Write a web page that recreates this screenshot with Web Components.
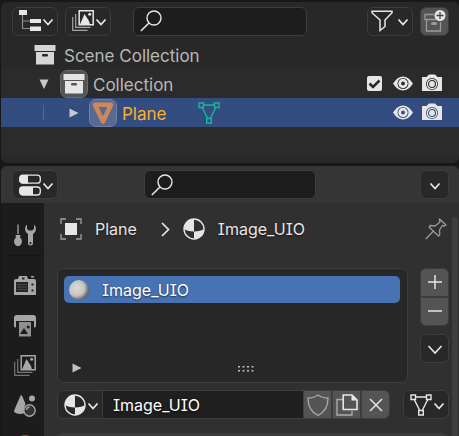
<!DOCTYPE html>
<html lang="en">
<head>
<meta charset="utf-8">
<title>Outliner and Properties</title>
<style>
html, body { height: 100%; }
body {
  margin: 0; background: #181818; color: #e6e6e6; overflow: hidden;
  font: 16px/22px Inter, "Noto Sans", sans-serif;
  font-feature-settings: "cv08" 1;
}
</style>
</head>
<body>
<editor-window></editor-window>
<script>
const ICONS = {
  tree: '<path d="M3.5 5v13.5H11M3.5 11H11" fill="none" stroke="#8c8c8c" stroke-width="1.2"/><path d="M0 0h8v5H0zM11 9h11v4H11zM11 16.5h11v4.500H11z" fill="currentColor"/>',
  images: '<path d="M.7 7v13.300H15.500M3.700 4v13.300H18.500" fill="none" stroke="currentColor" stroke-width="1.2" opacity=".65"/><path d="M7.200.8h14v14h-14z" fill="none" stroke="currentColor" stroke-width="1.5"/><path d="M8 14.500 12.500 4 17 11v0l1 3.500z" fill="currentColor"/><circle cx="17.700" cy="4.300" r="1.500" fill="currentColor"/>',
  search: '<circle cx="14" cy="8" r="7" fill="none" stroke="currentColor" stroke-width="1.400"/><path d="M9 13 .8 21" stroke="currentColor" stroke-width="1.600"/>',
  filter: '<path d="M1 1.200h20v1.500l-7 7.300v6.500L9 20.500V10L1 2.700z" fill="none" stroke="currentColor" stroke-width="1.500"/>',
  newcol: '<g fill="none" stroke="#999" stroke-width="1.300"><path d="M10 4.500H1v5h11M2.500 9.500V21h14v-9"/></g><rect x="7" y="12" width="6" height="3" rx="1.500" fill="#999"/><circle cx="16" cy="5.500" r="5.500" fill="currentColor"/><path d="M16 2v7M12.500 5.500h7" stroke="#444" stroke-width="1.300"/>',
  collection: '<path fill-rule="evenodd" d="M.5 1h21v6H.5zM2 8h18v12.500H2zM9 10q-1 0-1 1.200T9 12.500h4q1 0 1-1.300T13 10z" fill="currentColor"/>',
  object: '<path d="M3 2.700h16L11 19.500z" fill="none" stroke="#cc875c" stroke-width="4.600" stroke-linejoin="round"/>',
  mesh: '<path d="M3 3h16L11 19zM3 3" fill="none" stroke="currentColor" stroke-width="1.400"/><g fill="var(--hole,#282828)" stroke="currentColor" stroke-width="1.400"><path d="M1 1h4.500v4.500H1zM16.500 1H21v4.500h-4.500zM8.700 16.500h4.600V21H8.700z"/></g>',
  eye: '<path fill-rule="evenodd" d="M1 10.500Q5.500 3.500 11 3.500t10 7q-4.500 7-10 7T1 10.500zM11 5a5.500 5.500 0 1 0 0 11 5.500 5.500 0 0 0 0-11z" fill="currentColor"/><circle cx="11" cy="10.500" r="3.300" fill="none" stroke="currentColor" stroke-width="2.800"/>',
  camera: '<path fill-rule="evenodd" d="M1 4h4.500L8 1.500h6L16.500 4H21v14H1zM11 5a6 6 0 1 0 0 12 6 6 0 0 0 0-12z" fill="currentColor"/><circle cx="11" cy="11" r="4.600" fill="none" stroke="currentColor" stroke-width="1.200"/><circle cx="11" cy="11" r="2.900" fill="currentColor"/>',
  props: '<rect x=".7" y="1.200" width="20.600" height="8" rx="3" fill="none" stroke="currentColor" stroke-width="1.300"/><path d="M3.500 1H9v8.500H3.500Q.5 9 .5 5.200T3.500 1z" fill="currentColor"/><rect x=".7" y="13" width="20.600" height="8" rx="3" fill="none" stroke="currentColor" stroke-width="1.300"/><path d="M3.500 13h10.500v8H3.500Q.5 21 .5 17t3-4z" fill="currentColor"/>',
  bounds: '<path d="M1 6V1h5M16 1h5v5M21 16v5h-5M6 21H1v-5" fill="none" stroke="#a0a0a0" stroke-width="1.300"/><path d="M5 5h12v12H5z" fill="currentColor"/>',
  material: '<circle cx="11" cy="11" r="10" fill="none" stroke="currentColor" stroke-width="1.400"/><path d="M11 1v12.500Q4 13 1 11A10 10 0 0 1 11 1zM11 13.500q7-.5 10-2.500a10 10 0 0 1-10 10z" fill="currentColor"/>',
  next: '<path d="m8 5 6.500 6.500L8 18" fill="none" stroke="currentColor" stroke-width="1.700"/>',
  pin: '<path d="M14.500 1 21 7l-1.500 1-2-.5-3 4.500.3 4.500-1.300 1.500L4 9l1-1.500 5 .5L15 4l-.5-1.500zM8 13.500.8 21" fill="none" stroke="currentColor" stroke-width="1.300" stroke-linejoin="round"/>',
  tools: '<path d="M4 .5V10" stroke="currentColor" stroke-width="1.300"/><path d="M1.500 11h5L6 13.500q2 1.500 2 4T5.500 22h-3Q0 20 0 17.500t2-4z" fill="currentColor"/><path fill-rule="evenodd" d="M13 .5q-2 1.500-2 4.500t3 5v9.500q0 2 2.500 2t2.500-2V10q3-2 3-5t-2-4.500V5l-2 1.500h-3L13 5zM16.500 18a1 1 0 1 1 0 2.200 1 1 0 0 1 0-2.200z" fill="currentColor"/>',
  render: '<path d="M0 6q0-2 2-2h2l1-3h8l1 3h6q2 0 2 2v14H0zM17 1h3v1.500h-3z" fill="currentColor"/><path d="M8 2.500h2.500v2H8zM2 7h12v10H2zM17.500 8.500h2v2h-2zM17.500 14.500h2v2h-2z" fill="#242424"/><path d="M3 9.500h10M3 12h10M3 14.500h10" stroke="#555" stroke-width=".8"/>',
  output: '<path d="M0 11V3q0-3 3-3h16q3 0 3 3v8q0 1.500-2 1.500V6H2v6.500Q0 12.500 0 11z" fill="currentColor"/><path d="M5 7h12v14.500H5z" fill="#909090"/><path d="m6 19 4-6 4 6z" fill="#1c1c1c"/><circle cx="14.200" cy="12" r="1.500" fill="#1c1c1c"/>',
  scene: '<path d="M7 0q1 0 2 3l2.500 6q-2 3-1 9Q5 20.500 0 17q0-2 2-6L5.500 3Q6.500 0 7 0z" fill="currentColor"/><circle cx="18" cy="3.500" r="3" fill="currentColor"/><circle cx="15.500" cy="15.500" r="5.700" fill="#333" stroke="currentColor" stroke-width="1.400"/><path d="M12.500 15q0-2.500 3-3" fill="none" stroke="currentColor" stroke-width="1.300"/>',
  world: '<circle cx="11" cy="11" r="10" fill="none" stroke="#a04a50" stroke-width="2"/>',
  ball: '<defs><radialGradient id="g" cx=".38" cy=".4" r=".65"><stop offset="0" stop-color="#dcdcdc"/><stop offset=".6" stop-color="#c4c4c4"/><stop offset="1" stop-color="#555"/></radialGradient></defs><circle cx="11" cy="11" r="10" fill="url(#g)"/>',
  shield: '<path d="M11 1Q7 4 1 4q0 13 10 17.300Q21 17 21 4 15 4 11 1z" fill="none" stroke="#a5a5a5" stroke-width="1.400"/>',
  copy: '<path d="M7 5.500H1V21h15v-4" fill="none" stroke="#aaa" stroke-width="1.400"/><path d="M7.200 1H16l5 5v9.500H7.200z" fill="none" stroke="currentColor" stroke-width="1.600"/><path d="M15.500.5v6H22z" fill="currentColor"/>',
  close: '<path d="m5 5 12 12M17 5 5 17" stroke="currentColor" stroke-width="1.500"/>',
  plus: '<path d="M11 3v14M4 10h14" stroke="currentColor" stroke-width="1.500"/>',
  minus: '<path d="M4 10h14" stroke="currentColor" stroke-width="1.500"/>',
  down: '<path d="m4.500 8 6.500 7 6.500-7" fill="none" stroke="currentColor" stroke-width="1.600"/>',
  smalldown: '<path d="m6.500 9.500 4.500 5 4.500-5" fill="none" stroke="currentColor" stroke-width="1.800"/>',
  open: '<path d="M6.500 6.500h9L11 16z" fill="currentColor"/>',
  shut: '<path d="M6.500 6.500 15.500 11l-9 4.500z" fill="currentColor"/>',
  grip: '<path d="M3 9h2v1.500H3zM7.500 9h2v1.500h-2zM12 9h2v1.500h-2zM16.500 9h2v1.500h-2zM3 13h2v1.500H3zM7.500 13h2v1.500h-2zM12 13h2v1.500h-2zM16.500 13h2v1.500h-2z" fill="currentColor"/>'
};

function define(name, html, setup) {
  const template = document.createElement('template');
  template.innerHTML = html;
  customElements.define(name, class extends HTMLElement {
    static observedAttributes = ['name', 'icon', 'label'];
    constructor() {
      super();
      this.attachShadow({ mode: 'open' }).append(template.content.cloneNode(true));
    }
    connectedCallback() { if (setup) setup(this, this.shadowRoot); }
    attributeChangedCallback() { if (setup && this.isConnected) setup(this, this.shadowRoot); }
  });
}

define('ui-icon', `
<style>:host{display:block;flex:none;width:22px;height:22px} svg{display:block;overflow:visible}</style>
<svg width="22" height="22" viewBox="0 0 22 22" aria-hidden="true"></svg>`,
(host, root) => { root.querySelector('svg').innerHTML = ICONS[host.getAttribute('name')] || ''; });

// kind: "menu" adds a small arrow, "solid" is the raised grey look, "plain" has no box.
define('ui-button', `
<style>
:host{display:block;flex:none}
button{box-sizing:border-box;display:flex;align-items:center;justify-content:center;height:29px;width:29px;padding:0;
  border:1px solid #3d3d3d;border-radius:var(--radius,6px);background:#282828;color:#e6e6e6;font:inherit}
:host([kind=menu]) button{width:46px;padding:0 4px 0 6px;justify-content:space-between}
:host([kind=solid]) button{background:#545454}
:host([kind=plain]) button{width:22px;border:0;background:none;color:inherit}
.arrow{display:none;width:10px;margin:0}
.arrow ui-icon{margin:0 -6px}
:host([kind=menu]) .arrow{display:block}
:host([icon=filter]) button{padding-left:3px}
</style>
<button type="button"><ui-icon></ui-icon><span class="arrow"><ui-icon name="smalldown"></ui-icon></span></button>`,
(host, root) => {
  root.querySelector('ui-icon').setAttribute('name', host.getAttribute('icon'));
  root.querySelector('button').setAttribute('aria-label', host.getAttribute('label'));
});

define('ui-search', `
<style>
:host{display:block;flex:1;min-width:0}
label{box-sizing:border-box;display:flex;align-items:center;height:29px;padding:0 6px;gap:6px;background:#1d1d1d;border:1px solid #3d3d3d;border-radius:6px}
input{flex:1;min-width:0;border:0;padding:0;outline:0;background:none;color:inherit;font:inherit}
</style>
<label><ui-icon name="search"></ui-icon><input type="text" aria-label="Search"></label>`);

define('tree-row', `
<style>
:host{display:flex;align-items:center;height:29px;padding:0 16px 0 0;color:#b8b8b8;background:#282828}
:host([alt]){background:#2b2b2b}
:host([selected]){background:#334d80;color:#ffaf29;--hole:#334d80}
.side{display:flex;align-items:center;margin-left:auto;gap:7px;color:#e6e6e6}
</style>
<slot></slot><div class="side"><slot name="side"></slot></div>`);

define('ui-check', `
<style>
:host{display:block}
input{appearance:none;display:block;margin:0;width:15px;height:15px;border-radius:2px;background:#e6e6e6}
label{display:grid} label>*{grid-area:1/1}
svg{display:block;pointer-events:none;visibility:hidden} input:checked+svg{visibility:visible}
</style>
<label><input type="checkbox" checked aria-label="Include collection"><svg width="15" height="15" viewBox="0 0 15 15"><path d="m2.500 7.500 3.500 3.500 6.500-6.500" fill="none" stroke="#2b2b2b" stroke-width="2.600"/></svg></label>`);

define('outliner-editor', `
<style>
:host{display:block;flex:none;height:161px;background:#282828;border-radius:6px;overflow:hidden}
header{display:flex;align-items:center;height:38px;padding:0 10px 0 11px;gap:7px}
ui-search{margin:0 53px 0 15px}
.chip{padding:2px;border:1px solid #6a6a6a;border-radius:7px;background:#555;color:#e6e6e6}
.fold{width:10px;color:#c8c8c8}.fold ui-icon{margin:0 -6px}
.i0{margin:0 8px 0 33px;color:#d5d5d5}
.i1{margin:0 11px 0 38px}
.i2{width:1px;height:15px;background:#5f6879;margin:0 25px 0 42px}
.f2{margin-right:10px}
.name{padding-top:2px;font-size:17px}
.chip+.name{margin-left:5px}
.obj{background:#586a91;border-color:#71809f}
.mesh{margin-left:32px;color:#14b89a}
.eye{margin-left:3px}
</style>
<header>
  <ui-button kind="menu" icon="tree" label="Editor type"></ui-button>
  <ui-button kind="menu" icon="images" label="Display mode"></ui-button>
  <ui-search></ui-search>
  <ui-button kind="menu" icon="filter" label="Filter"></ui-button>
  <ui-button kind="solid" icon="newcol" label="New collection"></ui-button>
</header>
<tree-row><ui-icon class="i0" name="collection"></ui-icon><span class="name">Scene Collection</span></tree-row>
<tree-row alt>
  <span class="fold i1"><ui-icon name="open"></ui-icon></span>
  <span class="chip"><ui-icon name="collection"></ui-icon></span><span class="name">Collection</span>
  <ui-check slot="side"></ui-check><ui-icon class="eye" slot="side" name="eye"></ui-icon><ui-icon slot="side" name="camera"></ui-icon>
</tree-row>
<tree-row selected>
  <span class="i2"></span><span class="fold f2"><ui-icon name="shut"></ui-icon></span>
  <span class="chip obj"><ui-icon name="object"></ui-icon></span><span class="name">Plane</span>
  <ui-icon class="mesh" name="mesh"></ui-icon>
  <ui-icon slot="side" name="eye"></ui-icon><ui-icon slot="side" name="camera"></ui-icon>
</tree-row>
<tree-row alt></tree-row>`);

define('tab-rail', `
<style>
:host{display:flex;flex-direction:column;align-items:flex-end;flex:none;width:43px;background:#1c1c1c;color:#a6a6a6}
nav{display:flex;flex-direction:column;align-items:flex-end;padding:12px 0 0}
ui-button{height:40px;display:flex;align-items:center;margin-right:8px}
hr{width:35px;height:1px;margin:0 0 10px;border:0;background:#151515}
</style>
<nav aria-label="Property tabs">
  <ui-button kind="plain" icon="tools" label="Tool"></ui-button><hr>
  <ui-button kind="plain" icon="render" label="Render"></ui-button>
  <ui-button kind="plain" icon="output" label="Output"></ui-button>
  <ui-button kind="plain" icon="images" label="View layer"></ui-button>
  <ui-button kind="plain" icon="scene" label="Scene"></ui-button>
  <ui-button kind="plain" icon="world" label="World"></ui-button>
</nav>`);

define('material-slots', `
<style>
:host{display:flex;gap:12px;align-items:flex-start}
.list{box-sizing:border-box;flex:1;min-width:0;height:115px;display:flex;flex-direction:column;padding:7px 7px 3px 6px;background:#272727;border:1px solid #3d3d3d;border-radius:7px}
.item{display:flex;align-items:center;height:27px;padding:0 4px;gap:12px;border-radius:5px;background:#4772b3;color:#fff}
.foot{display:grid;grid-template-columns:1fr auto 1fr;align-items:center;margin-top:auto;color:#c0c0c0}
.foot ui-icon:first-child{margin-left:2px}
.grip{margin-left:28px}
.tools{display:flex;flex-direction:column}
.add{--radius:6px 6px 0 0}.del{--radius:0 0 6px 6px;margin:0 0 8px}
</style>
<div class="list">
  <div class="item"><ui-icon name="ball"></ui-icon><span>Image_UIO</span></div>
  <div class="foot"><ui-icon name="shut"></ui-icon><ui-icon class="grip" name="grip"></ui-icon></div>
</div>
<div class="tools">
  <ui-button class="add" kind="solid" icon="plus" label="Add slot"></ui-button>
  <ui-button class="del" kind="solid" icon="minus" label="Remove slot"></ui-button>
  <ui-button icon="down" label="Slot actions"></ui-button>
</div>`);

define('material-picker', `
<style>
:host{display:flex;margin-top:7px}
input{box-sizing:border-box;flex:1;min-width:0;height:29px;padding:0 10px;margin:0 -1px;border:1px solid #3d3d3d;border-radius:0;outline:0;background:#1f1f1f;color:#fff;font:inherit;font-feature-settings:inherit;text-shadow:inherit}
ui-button{--radius:0}
.first{--radius:6px 0 0 6px}.last{--radius:0 6px 6px 0}
.data{--radius:6px;margin-left:13px}
</style>
<ui-button class="first" kind="menu" icon="material" label="Browse materials"></ui-button>
<input type="text" value="Image_UIO" aria-label="Material name">
<ui-button kind="solid" icon="shield" label="Fake user"></ui-button>
<ui-button kind="solid" icon="copy" label="New material"></ui-button>
<ui-button class="last" kind="solid" icon="close" label="Unlink"></ui-button>
<ui-button class="data" kind="menu" icon="mesh" label="Link"></ui-button>`);

define('properties-editor', `
<style>
:host{display:flex;flex-direction:column;flex:1;min-height:0;background:#303030;border-radius:6px 6px 0 0;overflow:hidden}
header{display:flex;flex:none;align-items:center;height:37px;padding:0 10px 0 11px;background:#353535}
ui-search{margin:0 104px 0 86px}
.body{display:flex;flex:1;min-height:0;overflow:hidden}
main{flex:1;min-width:0;padding:15px 3px 0 13px;text-shadow:0 1px 2px #0009}
.path{display:flex;align-items:center;height:22px;margin:0 0 28px 3px}
.path span{margin:0 0 0 13px}
.next{margin:0 7px 0 17px}
.pin{margin:0 2px 0 auto;color:#999}
.panel{height:30px;margin:14px 2px 0 0;border-radius:6px;background:#3b3b3b}
.bar{flex:none;width:6px;margin:14px 1px 0 0;border-radius:3px 3px 0 0;background:#3e3e3e}
</style>
<header>
  <ui-button kind="menu" icon="props" label="Editor type"></ui-button>
  <ui-search></ui-search>
  <ui-button icon="smalldown" label="Options"></ui-button>
</header>
<div class="body">
  <tab-rail></tab-rail>
  <main>
    <div class="path">
      <ui-icon name="bounds"></ui-icon><span>Plane</span><ui-icon class="next" name="next"></ui-icon>
      <ui-icon name="material"></ui-icon><span>Image_UIO</span><ui-button kind="plain" class="pin" icon="pin" label="Pin"></ui-button>
    </div>
    <material-slots></material-slots>
    <material-picker></material-picker>
    <div class="panel"></div>
  </main>
  <div class="bar"></div>
</div>`);

define('editor-window', `
<style>:host{box-sizing:border-box;display:flex;flex-direction:column;gap:3px;height:100vh;padding:2px 0 0 1px}</style>
<outliner-editor></outliner-editor><properties-editor></properties-editor>`);
</script>
</body>
</html>
